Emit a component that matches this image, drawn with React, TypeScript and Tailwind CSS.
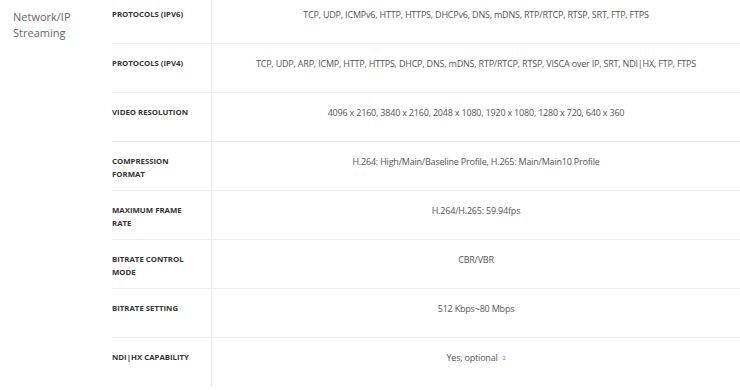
import React from 'react'

interface SpecRow {
  label: string[]
  value: React.ReactNode
}

const rows: SpecRow[] = [
  { label: ['PROTOCOLS (IPV6)'], value: 'TCP, UDP, ICMPv6, HTTP, HTTPS, DHCPv6, DNS, mDNS, RTP/RTCP, RTSP, SRT, FTP, FTPS' },
  { label: ['PROTOCOLS (IPV4)'], value: 'TCP, UDP, ARP, ICMP, HTTP, HTTPS, DHCP, DNS, mDNS, RTP/RTCP, RTSP, VISCA over IP, SRT, NDI|HX, FTP, FTPS' },
  { label: ['VIDEO RESOLUTION'], value: '4096 x 2160, 3840 x 2160, 2048 x 1080, 1920 x 1080, 1280 x 720, 640 x 360' },
  { label: ['COMPRESSION', 'FORMAT'], value: 'H.264: High/Main/Baseline Profile, H.265: Main/Main10 Profile' },
  { label: ['MAXIMUM FRAME', 'RATE'], value: 'H.264/H.265: 59.94fps' },
  { label: ['BITRATE CONTROL', 'MODE'], value: 'CBR/VBR' },
  { label: ['BITRATE SETTING'], value: '512 Kbps~80 Mbps' },
  {
    label: ['NDI|HX CAPABILITY'],
    value: (
      <>
        Yes, optional
        <span className="ml-[5px] inline-block align-[1px] text-[5.5px] leading-none text-[#6670d0]">2</span>
      </>
    ),
  },
]

const Row: React.FC<SpecRow> = ({ label, value }) => (
  <div className="flex h-[49px] border-b border-[#ececec] last:border-b-0">
    <div className="w-[99px] shrink-0 pt-[13px] text-[7.8px] leading-[12.5px] font-bold text-[#333]">
      {label.map((l, i) => (
        <div key={i}>{l}</div>
      ))}
    </div>
    <div className="flex-1 border-l border-[#ececec] pt-[12.5px] text-center text-[9px] leading-[14px] text-[#555] tracking-[-0.2px]">
      {value}
    </div>
  </div>
)

export default function App() {
  return (
    <div className="bg-white w-[740px] h-[390px] overflow-hidden" style={{ fontFamily: '"Open Sans", "Noto Sans", sans-serif' }}>
      <div className="flex -mt-[5px]">
        <div className="w-[112px] shrink-0 pl-[13px] pt-[14px] text-[11px] leading-[16px] text-[#666]">
          Network/IP
          <br />
          Streaming
        </div>
        <div className="flex-1">
          {rows.map((r, i) => (
            <Row key={i} {...r} />
          ))}
        </div>
      </div>
    </div>
  )
}
